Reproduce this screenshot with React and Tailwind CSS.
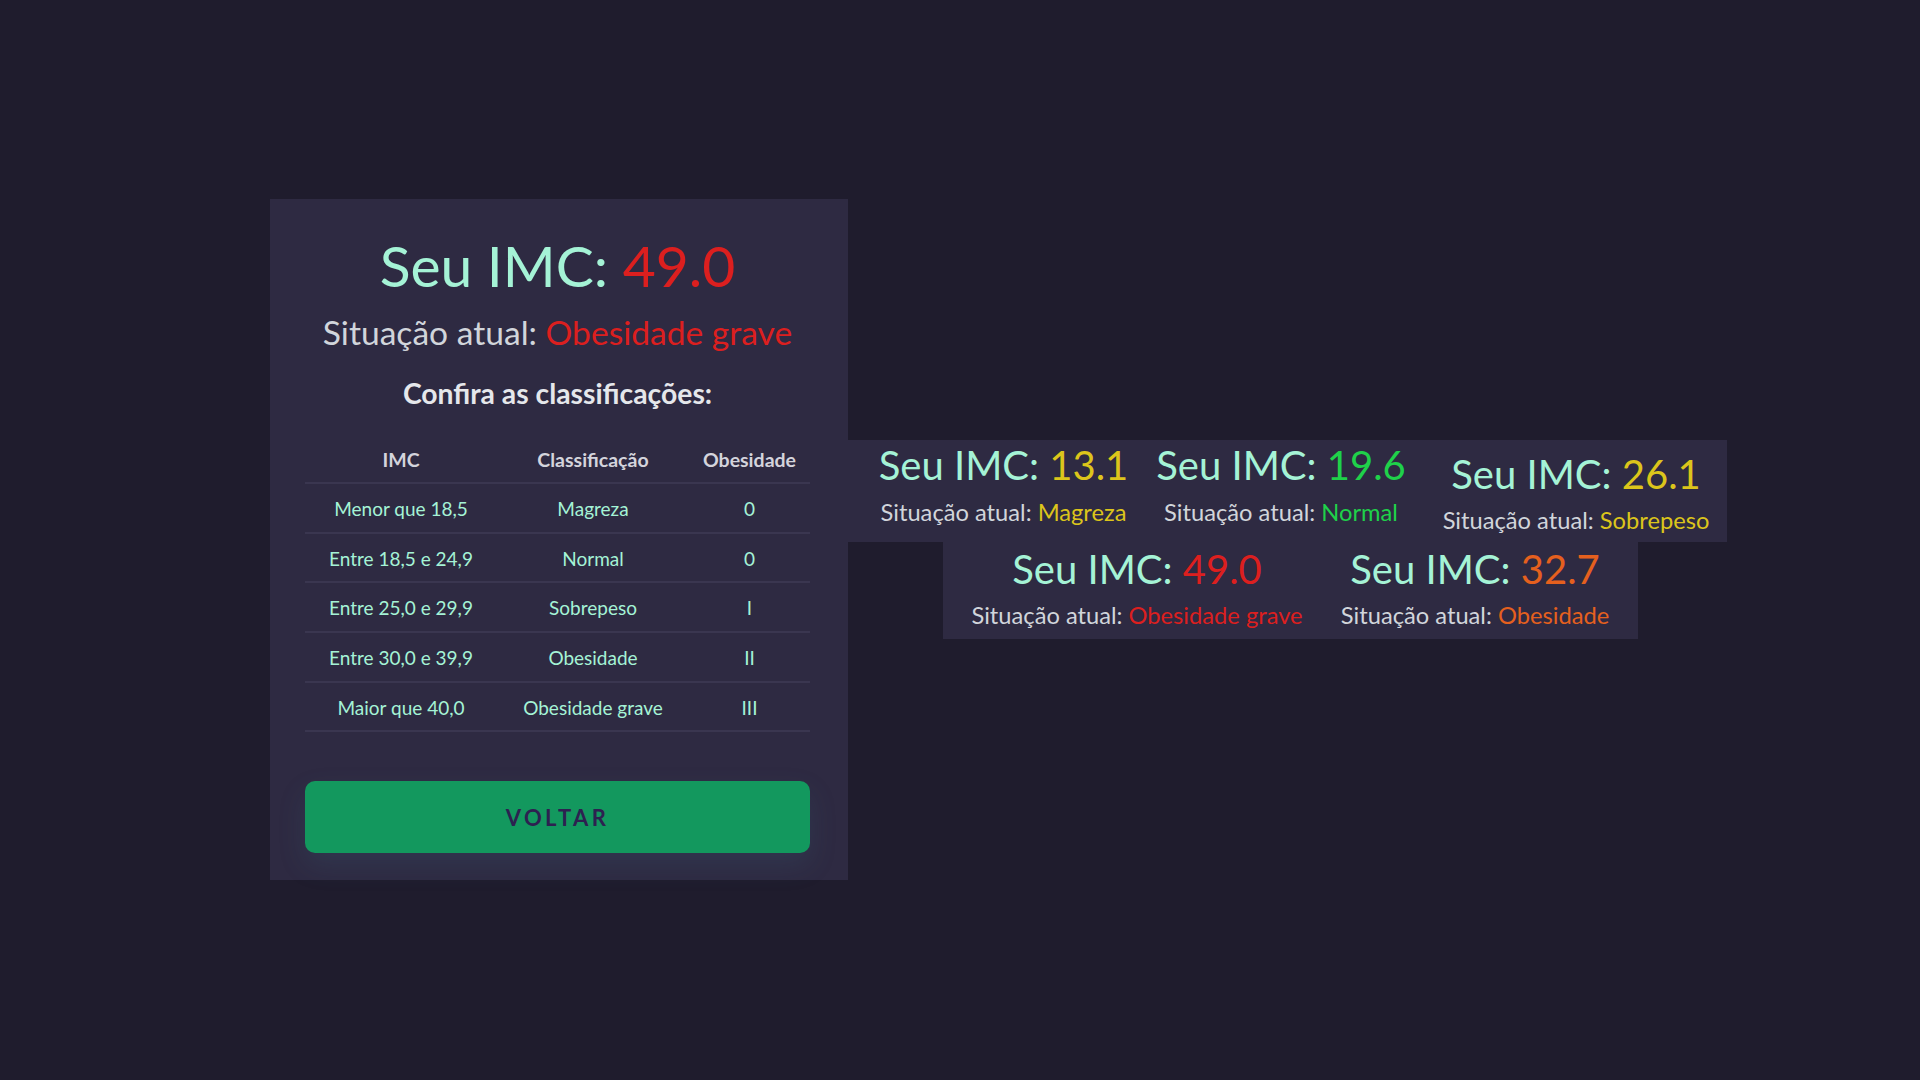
import React from "react";

const rows = [
  { imc: "Menor que 18,5", cls: "Magreza", ob: "0" },
  { imc: "Entre 18,5 e 24,9", cls: "Normal", ob: "0" },
  { imc: "Entre 25,0 e 29,9", cls: "Sobrepeso", ob: "I" },
  { imc: "Entre 30,0 e 39,9", cls: "Obesidade", ob: "II" },
  { imc: "Maior que 40,0", cls: "Obesidade grave", ob: "III" },
];

const Resultado = ({ value, label, color, className }) => (
  <div className={`flex flex-col items-center text-center ${className}`}>
    <h2 className="text-[40px] leading-[48px] text-[#a5f3d6] whitespace-nowrap">
      Seu IMC: <span className={color}>{value}</span>
    </h2>
    <p className="text-[23.7px] leading-[29px] text-[#d1d5db] whitespace-nowrap">
      Situação atual: <span className={color}>{label}</span>
    </p>
  </div>
);

export default function App() {
  return (
    <div className="min-h-screen bg-[#1f1c2d] font-['Lato',sans-serif] flex items-start pl-[270px] pt-[199px]">
      {/* Card principal */}
      <div className="w-[578px] bg-[#2e2a42] pl-[35px] pr-[38px] pt-[31px] pb-[27px] flex flex-col items-center">
        <h1 className="text-[57px] leading-[70px] text-[#a5f3d6] whitespace-nowrap">
          Seu IMC: <span className="text-[#dc1f1f]">49.0</span>
        </h1>
        <p className="mt-[12px] text-[33.6px] leading-[41px] text-[#d1d5db] whitespace-nowrap">
          Situação atual: <span className="text-[#dc1f1f]">Obesidade grave</span>
        </p>
        <h3 className="mt-[23px] text-[28.3px] leading-[34px] font-bold text-[#e5e7eb]">
          Confira as classificações:
        </h3>

        <div className="mt-[39px] w-full text-[19px] leading-[22px] text-center">
          <div className="grid grid-cols-[192px_192px_121px] border-b-2 border-[#3a3650] pb-[11px] text-[19.5px] font-bold text-[#d4d4dc]">
            <div>IMC</div>
            <div>Classificação</div>
            <div>Obesidade</div>
          </div>
          {rows.map((r) => (
            <div
              key={r.imc}
              className="grid grid-cols-[192px_192px_121px] h-[49.7px] pt-[14px] border-b-2 border-[#3a3650] text-[#a5f3d6]"
            >
              <div>{r.imc}</div>
              <div>{r.cls}</div>
              <div>{r.ob}</div>
            </div>
          ))}
        </div>

        <button className="mt-[49px] w-full h-[72px] rounded-[10px] bg-[#13985e] text-[#2d2150] text-[22px] font-bold tracking-[0.155em] shadow-[0_12px_28px_rgba(64,120,140,0.16)]">
          VOLTAR
        </button>
      </div>

      {/* Capturas dos resultados */}
      <div className="mt-[241px] flex flex-col">
        <div className="w-[879px] h-[102px] bg-[#2e2a42] flex items-start pl-[20px]">
          <Resultado value="13.1" label="Magreza" color="text-[#dcc51b]" className="w-[271px] pt-[1px] gap-[9px]" />
          <Resultado value="19.6" label="Normal" color="text-[#1fd14a]" className="w-[260px] ml-[12px] pt-[1px] gap-[9px]" />
          <Resultado value="26.1" label="Sobrepeso" color="text-[#dcc51b]" className="w-[280px] ml-[25px] pt-[10px] gap-[8px]" />
        </div>
        <div className="ml-[95px] w-[695px] h-[97px] bg-[#2e2a42] flex items-start pl-[19px]">
          <Resultado value="49.0" label="Obesidade grave" color="text-[#dc1f1f]" className="w-[350px] pt-[3px] gap-[8px]" />
          <Resultado value="32.7" label="Obesidade" color="text-[#e5601e]" className="w-[280px] ml-[23px] pt-[3px] gap-[8px]" />
        </div>
      </div>
    </div>
  );
}
